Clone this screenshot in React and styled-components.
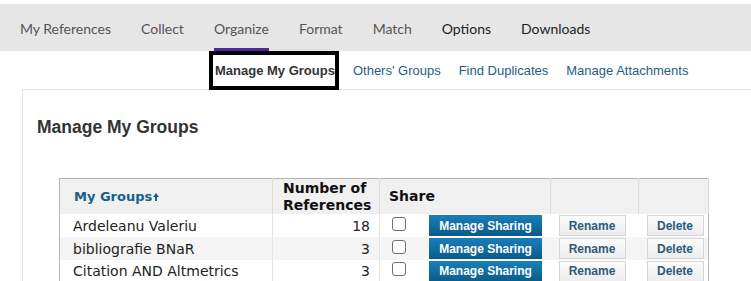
import React from "react";
import styled, { createGlobalStyle } from "styled-components";

const GlobalStyle = createGlobalStyle`
  body {
    margin: 0;
    background: #ffffff;
    font-family: "Liberation Sans", Arial, sans-serif;
  }
`;

const navItems = [
  { label: "My References" },
  { label: "Collect" },
  { label: "Organize", active: true },
  { label: "Format" },
  { label: "Match" },
  { label: "Options", dark: true },
  { label: "Downloads", dark: true },
];

const subTabs = [
  { label: "Manage My Groups", active: true },
  { label: "Others' Groups" },
  { label: "Find Duplicates" },
  { label: "Manage Attachments" },
];

const groups = [
  { name: "Ardeleanu Valeriu", count: 18 },
  { name: "bibliografie BNaR", count: 3 },
  { name: "Citation AND Altmetrics", count: 3 },
];

function SortArrow() {
  return (
    <svg width="6" height="8" viewBox="0 0 6 8">
      <path d="M3 0 L6 4 L4 4 L4 8 L2 8 L2 4 L0 4 Z" fill="#17608a" />
    </svg>
  );
}

export default function App() {
  return (
    <>
      <GlobalStyle />
      <Page>
        <TopBar>
          {navItems.map((item) => (
            <NavItem key={item.label} $active={item.active} $dark={item.dark}>
              {item.label}
            </NavItem>
          ))}
        </TopBar>

        <SubNav>
          {subTabs.map((tab) => (
            <SubTab key={tab.label} $active={tab.active}>
              {tab.label}
            </SubTab>
          ))}
        </SubNav>

        <Panel>
          <Heading>Manage My Groups</Heading>

          <GroupTable>
            <colgroup>
              <col style={{ width: 213 }} />
              <col style={{ width: 107 }} />
              <col style={{ width: 171 }} />
              <col style={{ width: 88 }} />
              <col style={{ width: 70 }} />
            </colgroup>
            <thead>
              <tr>
                <HeadCell>
                  <SortLink>
                    My Groups
                    <SortArrow />
                  </SortLink>
                </HeadCell>
                <HeadCell $padLeft={10}>
                  Number of
                  <br />
                  References
                </HeadCell>
                <HeadCell $padLeft={9}>Share</HeadCell>
                <HeadCell />
                <HeadCell />
              </tr>
            </thead>
            <tbody>
              {groups.map((g, i) => (
                <Row key={g.name} $striped={i % 2 === 1}>
                  <NameCell>{g.name}</NameCell>
                  <CountCell>{g.count}</CountCell>
                  <ShareCell>
                    <ShareInner>
                      <Check type="checkbox" />
                      <SharingButton>Manage Sharing</SharingButton>
                    </ShareInner>
                  </ShareCell>
                  <ActionCell>
                    <PlainButton $width={67}>Rename</PlainButton>
                  </ActionCell>
                  <ActionCell>
                    <PlainButton $width={57}>Delete</PlainButton>
                  </ActionCell>
                </Row>
              ))}
            </tbody>
          </GroupTable>
        </Panel>
      </Page>
    </>
  );
}

const Page = styled.div`
  width: 751px;
  height: 281px;
  overflow: hidden;
  padding-top: 4px;
  box-sizing: border-box;
`;

const TopBar = styled.nav`
  display: flex;
  gap: 30px;
  height: 47px;
  padding-left: 20px;
  background: #e6e6e6;
`;

const NavItem = styled.div`
  display: flex;
  align-items: center;
  padding-top: 2px;
  box-sizing: border-box;
  font-family: Lato, "Open Sans", sans-serif;
  font-size: 14px;
  color: ${(p) => (p.$dark ? "#222222" : "#555555")};
  box-shadow: ${(p) => (p.$active ? "inset 0 -3px 0 #4b2a9b" : "none")};
`;

const SubNav = styled.div`
  display: flex;
  align-items: stretch;
  gap: 18px;
  height: 39px;
  padding-left: 209px;
`;

const SubTab = styled.div`
  display: flex;
  align-items: center;
  font-size: 13px;
  color: ${(p) => (p.$active ? "#333333" : "#1b6089")};
  font-weight: ${(p) => (p.$active ? "bold" : "normal")};
  border: ${(p) => (p.$active ? "4px solid #000000" : "none")};
  padding: ${(p) => (p.$active ? "0 0 0 2px" : "0")};
  margin-right: ${(p) => (p.$active ? "-4px" : "0")};
  position: relative;
  z-index: 1;
`;

const Panel = styled.section`
  margin-left: 22px;
  margin-top: -1px;
  border-top: 1px solid #e2e2e2;
  border-left: 1px solid #e2e2e2;
  padding: 27px 0 0 14px;
  height: 300px;
`;

const Heading = styled.h2`
  margin: 0;
  font-size: 17.5px;
  line-height: 20px;
  font-weight: bold;
  color: #333333;
`;

const GroupTable = styled.table`
  margin: 41px 0 0 22px;
  width: 650px;
  table-layout: fixed;
  border-collapse: collapse;
  border: 1px solid #b4b4b4;
  font-family: "DejaVu Sans", Verdana, sans-serif;
`;

const HeadCell = styled.th`
  height: 35px;
  padding: 0 0 0 ${(p) => p.$padLeft ?? 0}px;
  background: #f0f0f0;
  border-right: 1px solid #dcdcdc;
  text-align: left;
  vertical-align: middle;
  font-size: 14px;
  line-height: 17px;
  font-weight: bold;
  color: #111111;
`;

const SortLink = styled.span`
  display: inline-flex;
  align-items: center;
  gap: 1px;
  padding-left: 14px;
  font-size: 13px;
  color: #17608a;
`;

const Row = styled.tr`
  height: 23px;
  background: ${(p) => (p.$striped ? "#f5f5f5" : "#ffffff")};
`;

const BodyCell = styled.td`
  padding: 0;
  vertical-align: middle;
  border-right: 1px solid #e4e4e4;
  font-size: 14px;
  color: #222222;
`;

const NameCell = styled(BodyCell)`
  padding-left: 13px;
`;

const CountCell = styled(BodyCell)`
  text-align: right;
  padding-right: 9px;
`;

const ShareCell = styled(BodyCell)`
  border-right: none;
`;

const ActionCell = styled(BodyCell)`
  padding-left: 8px;
  border-right: none;
`;

const ShareInner = styled.div`
  display: flex;
  align-items: center;
  padding-left: 12px;
  gap: 23px;
`;

const Check = styled.input`
  appearance: none;
  margin: 0;
  width: 14px;
  height: 14px;
  border: 1px solid #6f6f6f;
  border-radius: 3px;
  background: #ffffff;
  box-sizing: border-box;
  position: relative;
  top: -2px;
`;

const SharingButton = styled.button`
  width: 113px;
  height: 21px;
  padding: 0;
  border: none;
  background: linear-gradient(#1a7fb8, #0a5b8a);
  color: #ffffff;
  font-family: "Liberation Sans", Arial, sans-serif;
  font-size: 12px;
  font-weight: bold;
`;

const PlainButton = styled.button`
  display: block;
  width: ${(p) => p.$width}px;
  height: 21px;
  padding: 0;
  border: 1px solid #d6d6d6;
  background: linear-gradient(#fbfbfb, #ededed);
  color: #2d5b7c;
  font-family: "Liberation Sans", Arial, sans-serif;
  font-size: 12px;
  font-weight: bold;
`;
